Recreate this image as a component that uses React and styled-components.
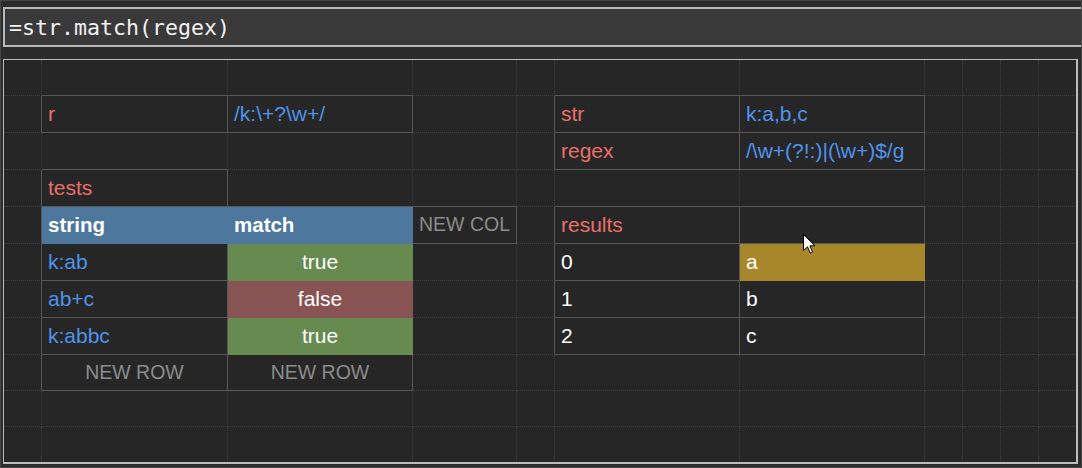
import styled, { createGlobalStyle } from 'styled-components'

const GlobalStyle = createGlobalStyle`
  html, body {
    margin: 0;
    padding: 0;
    background: #2b2b2b;
    overflow: hidden;
  }
`

const COLS = [38, 186, 185, 104, 38, 185, 185, 38, 38, 38, 38]
const ROWS = [36, 37, 37, 37, 37, 37, 37, 37, 36, 36, 36]

// key "row,col" -> cell content
const CELLS = {
  '1,1': { text: 'r', tone: 'label' },
  '1,2': { text: '/k:\\+?\\w+/', tone: 'value' },
  '1,5': { text: 'str', tone: 'label' },
  '1,6': { text: 'k:a,b,c', tone: 'value' },
  '2,5': { text: 'regex', tone: 'label' },
  '2,6': { text: '/\\w+(?!:)|(\\w+)$/g', tone: 'value' },
  '3,1': { text: 'tests', tone: 'label' },
  '4,1': { text: 'string', tone: 'head' },
  '4,2': { text: 'match', tone: 'head' },
  '4,3': { text: 'NEW COL', tone: 'ghost' },
  '4,5': { text: 'results', tone: 'label' },
  '4,6': { text: '', tone: 'plain' },
  '5,1': { text: 'k:ab', tone: 'value' },
  '5,2': { text: 'true', tone: 'ok' },
  '5,5': { text: '0', tone: 'plain' },
  '5,6': { text: 'a', tone: 'hit' },
  '6,1': { text: 'ab+c', tone: 'value' },
  '6,2': { text: 'false', tone: 'bad' },
  '6,5': { text: '1', tone: 'plain' },
  '6,6': { text: 'b', tone: 'plain' },
  '7,1': { text: 'k:abbc', tone: 'value' },
  '7,2': { text: 'true', tone: 'ok' },
  '7,5': { text: '2', tone: 'plain' },
  '7,6': { text: 'c', tone: 'plain' },
  '8,1': { text: 'NEW ROW', tone: 'ghost' },
  '8,2': { text: 'NEW ROW', tone: 'ghost' },
}

const TONES = {
  label: { color: '#ea6f6a', bg: null, align: 'left', weight: 400, size: 21 },
  value: { color: '#4f93ec', bg: null, align: 'left', weight: 400, size: 21 },
  plain: { color: '#ffffff', bg: null, align: 'left', weight: 400, size: 21 },
  ghost: { color: '#8c8c8c', bg: null, align: 'center', weight: 400, size: 19.5 },
  head: { color: '#ffffff', bg: '#4d779d', align: 'left', weight: 700, size: 20.5 },
  ok: { color: '#ffffff', bg: '#668a4f', align: 'center', weight: 400, size: 21 },
  bad: { color: '#ffffff', bg: '#875353', align: 'center', weight: 400, size: 21 },
  hit: { color: '#ffffff', bg: '#a8872b', align: 'left', weight: 400, size: 21 },
}

const Frame = styled.div`
  box-sizing: border-box;
  width: 1082px;
  height: 468px;
  border: 1px solid #474747;
  padding: 6px 0 0 2px;
  display: flex;
  flex-direction: column;
  gap: 12px;
  overflow: hidden;
`

const FormulaBar = styled.div`
  box-sizing: border-box;
  width: 1090px;
  height: 40px;
  border: 2px solid #b9b9b9;
  background: #393939;
  display: flex;
  align-items: center;
  padding-left: 4px;
  font-family: 'DejaVu Sans Mono', 'Liberation Mono', monospace;
  font-size: 21.6px;
  color: #f2f2f2;
`

const Sheet = styled.div`
  position: relative;
  box-sizing: border-box;
  width: 1075px;
  height: 405px;
  border: 1px solid #bcbcbc;
  border-right-width: 2px;
  border-bottom-width: 2px;
  background: #262626;
  overflow: hidden;
`

const Grid = styled.div`
  display: grid;
  grid-template-columns: ${COLS.map((w) => `${w}px`).join(' ')};
  grid-template-rows: ${ROWS.map((h) => `${h}px`).join(' ')};
  font-family: 'Liberation Sans', Arial, sans-serif;
`

const Cell = styled.div`
  box-sizing: border-box;
  display: flex;
  align-items: center;
  justify-content: ${(p) => (p.$align === 'center' ? 'center' : 'flex-start')};
  padding: 0 6px 1px;
  white-space: nowrap;
  overflow: hidden;
  font-size: ${(p) => p.$size}px;
  color: ${(p) => p.$color};
  font-weight: ${(p) => p.$weight};
  background: ${(p) => p.$bg || 'transparent'};
  border-right: 1px ${(p) => (p.$solidRight ? 'solid' : 'dotted')}
    ${(p) => (p.$bg ? 'transparent' : p.$solidRight ? '#575757' : '#3d3d3d')};
  border-bottom: 1px ${(p) => (p.$solidBottom ? 'solid' : 'dotted')}
    ${(p) => (p.$bg ? 'transparent' : p.$solidBottom ? '#575757' : '#3d3d3d')};
`

const Pointer = styled.svg`
  position: absolute;
  left: 799px;
  top: 174px;
  width: 13px;
  height: 20px;
`

const boxed = (r, c) => Boolean(CELLS[`${r},${c}`])

const App = () => {
  const cells = []
  ROWS.forEach((_, r) => {
    COLS.forEach((__, c) => {
      const data = CELLS[`${r},${c}`]
      const tone = TONES[data ? data.tone : 'plain']
      cells.push(
        <Cell
          key={`${r}-${c}`}
          $align={tone.align}
          $size={tone.size}
          $color={tone.color}
          $weight={tone.weight}
          $bg={data ? tone.bg : null}
          $solidRight={boxed(r, c) || boxed(r, c + 1)}
          $solidBottom={boxed(r, c) || boxed(r + 1, c)}
        >
          {data ? data.text : ''}
        </Cell>
      )
    })
  })

  return (
    <>
      <GlobalStyle />
      <Frame>
        <FormulaBar>=str.match(regex)</FormulaBar>
        <Sheet>
          <Grid>{cells}</Grid>
          <Pointer viewBox="0 0 13 20">
            <path
              d="M0.5 0.5 L0.5 16.5 L4.5 12.8 L7.3 19 L9.6 18 L6.9 11.8 L12 11.8 Z"
              fill="#ffffff"
              stroke="#000000"
              strokeWidth="1"
              strokeLinejoin="miter"
            />
          </Pointer>
        </Sheet>
      </Frame>
    </>
  )
}

export default App
